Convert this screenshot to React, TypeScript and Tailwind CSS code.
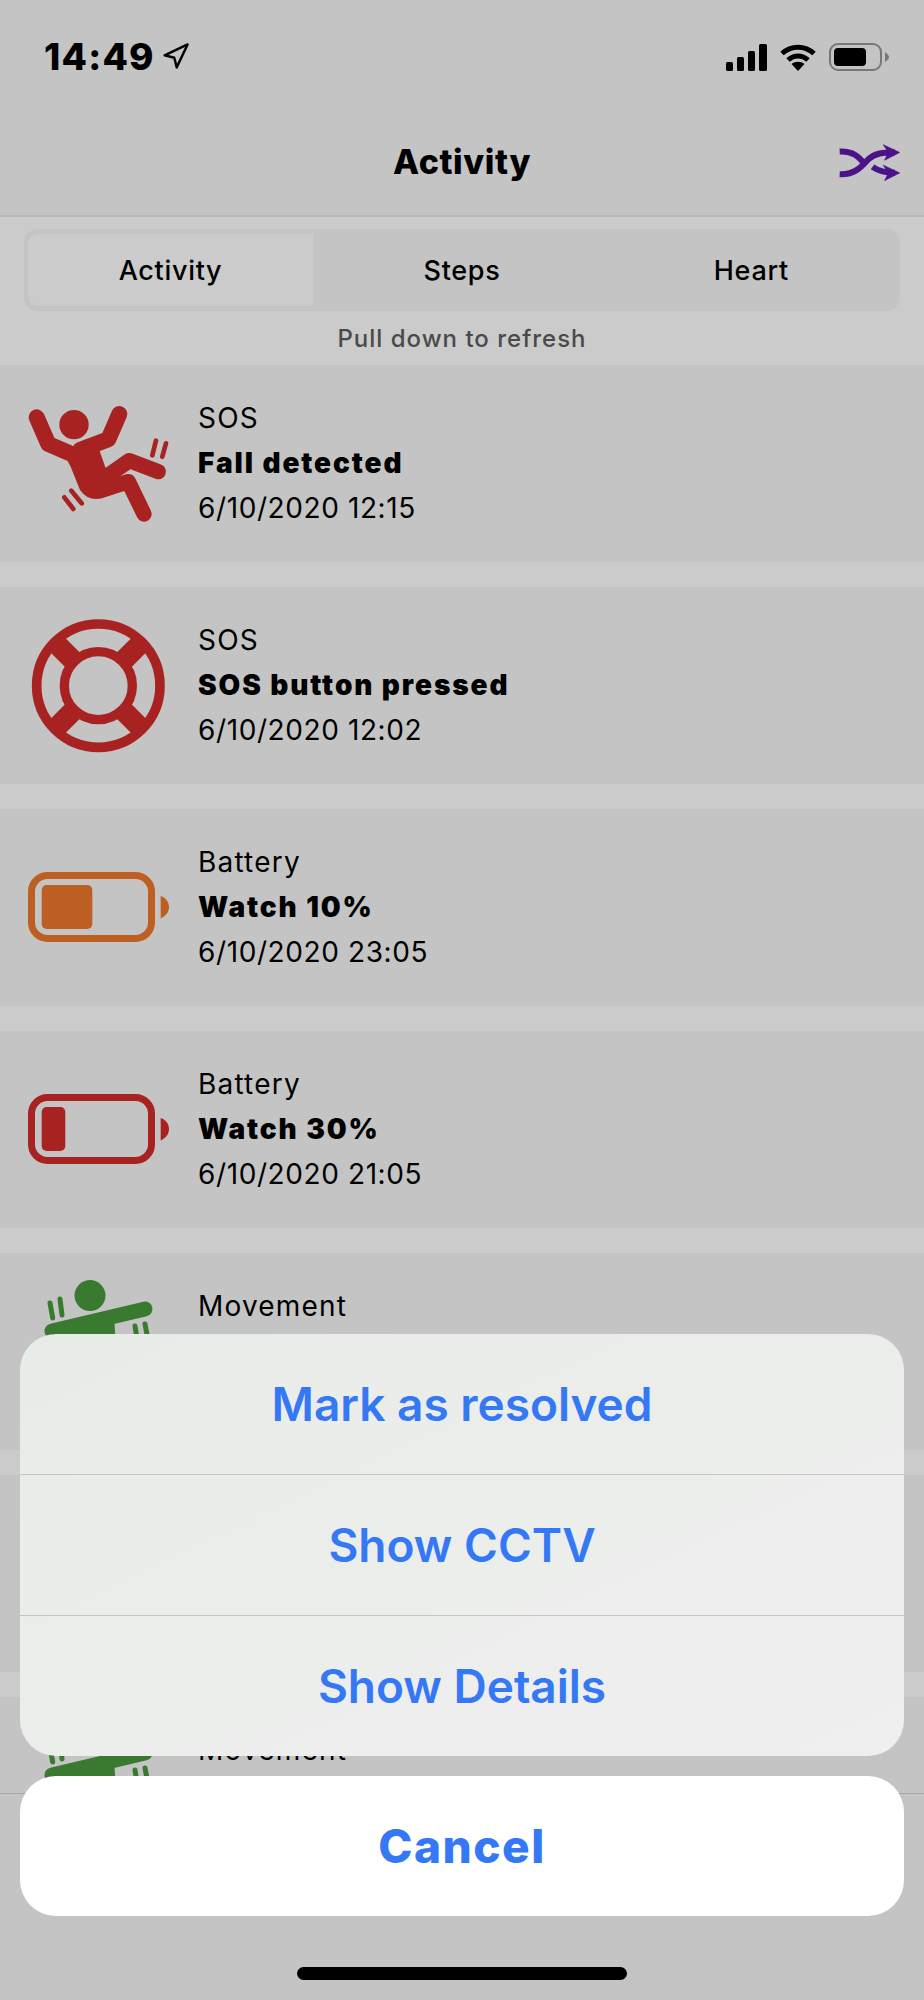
import { Navigation } from "lucide-react";

type Item = {
  id: number;
  kind: "fall" | "sos" | "battery10" | "battery30" | "movement";
  label: string;
  detail: string;
  time: string;
};

// rows 5-7 sit behind the action sheet, only row 5 and 7 labels show
const items: Item[] = [
  { id: 1, kind: "fall", label: "SOS", detail: "Fall detected", time: "6/10/2020 12:15" },
  { id: 2, kind: "sos", label: "SOS", detail: "SOS button pressed", time: "6/10/2020 12:02" },
  { id: 3, kind: "battery10", label: "Battery", detail: "Watch 10%", time: "6/10/2020 23:05" },
  { id: 4, kind: "battery30", label: "Battery", detail: "Watch 30%", time: "6/10/2020 21:05" },
  { id: 5, kind: "movement", label: "Movement", detail: "", time: "" },
  { id: 6, kind: "movement", label: "", detail: "", time: "" },
  { id: 7, kind: "movement", label: "Movement", detail: "", time: "" },
];

function FallIcon() {
  const c = "#a82222";
  return (
    <g transform="translate(0,5) scale(0.3333)" fill="none" stroke={c} strokeLinecap="round" strokeLinejoin="round">
      <circle cx="222" cy="164" r="44" fill={c} stroke="none" />
      <path d="M110 142 L145 222 L205 248" strokeWidth="48" />
      <path d="M358 132 L325 208 L240 240" strokeWidth="48" />
      <path d="M190 250 L295 232 L317 295 L375 340 L375 360 L305 385 Q265 395 240 360 L212 290 Z" fill={c} stroke="none" />
      <path d="M330 312 L388 272 L475 305" strokeWidth="46" />
      <path d="M300 362 L385 335 L432 432" strokeWidth="46" />
      <path d="M468 212 L457 256 M498 220 L487 260 M214 362 L245 400 M193 382 L220 417" strokeWidth="14" />
    </g>
  );
}

function SosIcon() {
  const c = "#a82222";
  return (
    <g transform="translate(0,-227) scale(0.3333)" fill="none" stroke={c}>
      <circle cx="295" cy="977" r="185" strokeWidth="29" />
      <circle cx="295" cy="977" r="102" strokeWidth="28" />
      <path d="M223 905 L164 846 M367 905 L426 846 M223 1049 L164 1108 M367 1049 L426 1108" strokeWidth="62" />
    </g>
  );
}

function BatteryIcon({ color, level }: { color: string; level: number }) {
  return (
    <g>
      <rect x="31.5" y="66.5" width="120" height="63" rx="16" fill="none" stroke={color} strokeWidth="7" />
      <rect x="41.7" y="76" width={level} height="44" rx="5" fill={color} />
      <path d="M160.7 87 C166 89 169 93 169 98 C169 103 166 107 160.7 109.5 Z" fill={color} />
    </g>
  );
}

function MovementIcon() {
  const c = "#3a7a30";
  return (
    <g fill="none" stroke={c} strokeLinecap="round">
      <circle cx="90" cy="42.6" r="15.5" fill={c} stroke="none" />
      <path d="M52 78 L145 56" strokeWidth="15" />
      <path d="M54 72 L114 62 L117 110 L60 110 Z" fill={c} stroke="none" />
      <path d="M50 50 L52.7 65 M60 46 L62 62 M135 73 L138 92 M145 71 L149 92" strokeWidth="5" />
    </g>
  );
}

function RowIcon({ kind }: { kind: Item["kind"] }) {
  return (
    <svg viewBox="0 0 198 197" className="h-[197px] w-[198px] shrink-0">
      {kind === "fall" && <FallIcon />}
      {kind === "sos" && <SosIcon />}
      {kind === "battery10" && <BatteryIcon color="#bd5f22" level={50.6} />}
      {kind === "battery30" && <BatteryIcon color="#a82222" level={23.6} />}
      {kind === "movement" && <MovementIcon />}
    </svg>
  );
}

function StatusIcons() {
  return (
    <div className="flex items-center">
      <svg viewBox="0 0 41 27" className="h-[27px] w-[41px]" fill="#000">
        <rect x="0" y="18" width="7" height="9" rx="1.5" />
        <rect x="11" y="13" width="7" height="14" rx="1.5" />
        <rect x="22" y="7" width="7" height="20" rx="1.5" />
        <rect x="33" y="0" width="8" height="27" rx="1.5" />
      </svg>
      <svg viewBox="0 0 36 27" className="ml-[13px] h-[27px] w-[36px]" fill="none" stroke="#000" strokeWidth="5">
        <path d="M2 9.5 C11 1 25 1 34 9.5" />
        <path d="M8 16 C14 10.5 22 10.5 28 16" />
        <path d="M18 27 L11.5 20 C15 17 21 17 24.5 20 Z" fill="#000" stroke="none" />
      </svg>
      <svg viewBox="0 0 60 28" className="ml-[13px] h-[28px] w-[60px]">
        <rect x="1" y="1" width="51" height="26" rx="8" fill="none" stroke="#777" strokeWidth="2" />
        <rect x="5" y="5" width="32" height="18" rx="4" fill="#000" />
        <path d="M56 9 C59 11 60 13 60 14 C60 15 59 17 56 19 Z" fill="#777" />
      </svg>
    </div>
  );
}

function ShuffleIcon() {
  return (
    <svg viewBox="175 372 185 110" className="h-[37px] w-[62px]" fill="none" stroke="#4c1289" strokeWidth="18">
      <path d="M180 394 C225 392 240 415 255 432" />
      <path d="M180 462 C225 464 245 440 265 418 C285 398 310 397 345 397" />
      <path d="M278 440 C295 452 315 458 345 458" />
      <path d="M310 374 L359 397 L314 420 L326 397 Z" fill="#4c1289" strokeWidth="2" />
      <path d="M310 435 L359 458 L314 481 L326 458 Z" fill="#4c1289" strokeWidth="2" />
    </svg>
  );
}

export default function App() {
  return (
    <div className="relative flex h-[2000px] w-[924px] flex-col overflow-hidden bg-[#cbcbcb] [font-family:Inter,'Liberation_Sans',sans-serif] text-black">
      <header className="h-[217px] shrink-0 border-b-2 border-[#b9b9b9] bg-[#c4c4c4]">
        <div className="flex items-start justify-between pl-[44px] pr-[35px] pt-[43px]">
          <div className="flex items-center">
            <span className="text-[37px] leading-[27px] font-extrabold tracking-[1.2px]">14:49</span>
            <Navigation size={29} strokeWidth={2} className="ml-[6px] -my-1" />
          </div>
          <StatusIcons />
        </div>
        <div className="mt-[71px] grid grid-cols-[1fr_auto_1fr] items-center px-[24px]">
          <div />
          <h1 className="text-[34px] leading-[40px] font-extrabold tracking-[0.6px]">Activity</h1>
          <div className="flex justify-end">
            <ShuffleIcon />
          </div>
        </div>
      </header>

      <div className="mx-[24px] mt-[12px] grid h-[82px] shrink-0 grid-cols-3 rounded-[14px] bg-[#c4c4c4] px-[4px] py-[5px] text-[27px] font-medium tracking-[0.7px]">
        <div className="flex w-[285px] items-center justify-center rounded-l-[10px] bg-[#cbcbcb] pt-[2px]">Activity</div>
        <div className="flex items-center justify-center pt-[2px]">Steps</div>
        <div className="flex items-center justify-center pt-[2px]">Heart</div>
      </div>

      <p className="mt-[13px] h-[41px] shrink-0 text-center text-[24px] leading-[30px] font-medium tracking-[1px] text-[#4a4a4a]">
        Pull down to refresh
      </p>

      <ul className="flex min-h-0 flex-1 flex-col gap-[25px] overflow-hidden">
        {items.map((item) => (
          <li key={item.id} className="flex h-[197px] shrink-0 items-center bg-[#c4c4c4]">
            <RowIcon kind={item.kind} />
            <div className="text-[28px] leading-[45px]">
              <div className="h-[45px] tracking-[1.2px]">{item.label}</div>
              <div className="h-[45px] font-black tracking-[1.9px]">{item.detail}</div>
              <div className="h-[45px] tracking-[0.6px]">{item.time}</div>
            </div>
          </li>
        ))}
      </ul>

      <div className="flex h-[207px] shrink-0 items-end justify-center border-t border-[#a6a6a6] bg-[#c4c4c4] pb-[20px]">
        <div className="h-[13px] w-[330px] rounded-full bg-black" />
      </div>

      <div className="absolute inset-x-[20px] top-[1334px] flex flex-col gap-[20px] text-[46px] text-[#3478f6]">
        <div className="flex h-[422px] flex-col divide-y divide-[#c3c6c3] overflow-hidden rounded-[36px] bg-gradient-to-br from-[#e8ece8] to-[#efefef] font-semibold">
          <button className="flex-1">Mark as resolved</button>
          <button className="flex-1">Show CCTV</button>
          <button className="flex-1">Show Details</button>
        </div>
        <button className="h-[140px] rounded-[36px] bg-white font-extrabold tracking-[1.5px]">Cancel</button>
      </div>
    </div>
  );
}
